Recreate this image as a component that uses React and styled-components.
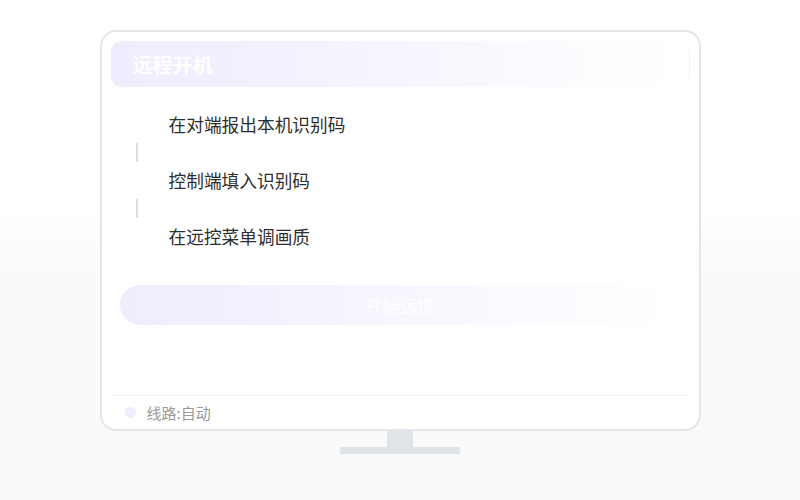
import React from 'react';
import styled, { createGlobalStyle } from 'styled-components';

const GlobalStyle = createGlobalStyle`
  html, body {
    margin: 0;
    padding: 0;
  }
  body {
    font-family: "Noto Sans CJK SC", "Noto Sans", sans-serif;
    background: linear-gradient(180deg, #ffffff 0%, #ffffff 42%, #fafafb 54%, #fafafb 100%);
    min-height: 500px;
  }
`;

const steps = ['在对端报出本机识别码', '控制端填入识别码', '在远控菜单调画质'];

const App = () => {
  return (
    <>
      <GlobalStyle />
      <Page>
        <Monitor>
          <Screen>
            <Header>
              <Title>远程开机</Title>
              <HeaderTools>
                <svg width="48" height="14" viewBox="0 0 48 14">
                  <path d="M6 2 L1 7 L6 12" stroke="#fff" strokeWidth="2" fill="none" />
                  <path d="M24 3 L28 7 L24 11 L20 7 Z" fill="#fff" />
                  <path d="M42 2 L47 7 L42 12" stroke="#fff" strokeWidth="2" fill="none" />
                </svg>
                <Divider />
              </HeaderTools>
            </Header>
            <Steps>
              {steps.map((s, i) => (
                <React.Fragment key={s}>
                  <Step>{s}</Step>
                  {i < steps.length - 1 && <Connector />}
                </React.Fragment>
              ))}
            </Steps>
            <StartButton>开始远控</StartButton>
            <Spacer />
            <Footer>
              <Dot />
              <Route>线路:自动</Route>
            </Footer>
          </Screen>
        </Monitor>
        <Neck />
        <Base />
      </Page>
    </>
  );
};

const Page = styled.div`
  display: flex;
  flex-direction: column;
  align-items: center;
  padding-top: 30px;
`;

const Monitor = styled.div`
  width: 601px;
  height: 401px;
  box-sizing: border-box;
  border: 2px solid #e2e5ea;
  border-radius: 16px;
  background: #ffffff;
  padding: 9px 9px 0 9px;
`;

const Screen = styled.div`
  display: flex;
  flex-direction: column;
  height: 100%;
`;

const Header = styled.div`
  height: 46px;
  border-radius: 11px;
  background: linear-gradient(90deg, #efecfd 0%, #f6f4fe 45%, #fdfdff 85%, #ffffff 100%);
  display: flex;
  align-items: center;
  justify-content: space-between;
  padding: 0 0 0 22px;
`;

const Title = styled.h1`
  margin: 0;
  font-size: 20px;
  font-weight: 700;
  color: #ffffff;
`;

const HeaderTools = styled.div`
  display: flex;
  align-items: center;
  gap: 22px;
  opacity: 0.9;
`;

const Divider = styled.div`
  width: 1px;
  height: 30px;
  background: #f1f1f5;
`;

const Steps = styled.div`
  display: flex;
  flex-direction: column;
  padding: 22px 0 0 25px;
`;

const Step = styled.div`
  font-size: 17.7px;
  line-height: 30px;
  color: #2e2e2e;
  padding-left: 33px;
`;

const Connector = styled.div`
  width: 2px;
  height: 19px;
  margin: 4px 0 3px 0;
  background: #dcdde3;
`;

const StartButton = styled.button`
  margin: 34px 9px 0 9px;
  height: 40px;
  border: none;
  border-radius: 20px;
  background: linear-gradient(90deg, #efecfd 0%, #f7f5fe 45%, #fcfcff 80%, #ffffff 100%);
  color: #ffffff;
  font-family: inherit;
  font-size: 17.5px;
  font-weight: 400;
  cursor: pointer;
`;

const Spacer = styled.div`
  flex: 1;
`;

const Footer = styled.div`
  height: 33px;
  border-top: 1px solid #eceef3;
  margin: 0 3px 0 2px;
  display: flex;
  align-items: center;
  padding-left: 12px;
  gap: 11px;
`;

const Dot = styled.span`
  width: 11px;
  height: 11px;
  border-radius: 50%;
  background: #efecfd;
`;

const Route = styled.span`
  font-size: 15px;
  color: #9a9a9a;
`;

const Neck = styled.div`
  width: 26px;
  height: 16px;
  background: #e0e3e8;
`;

const Base = styled.div`
  width: 120px;
  height: 7px;
  background: #e0e3e8;
`;

export default App;
